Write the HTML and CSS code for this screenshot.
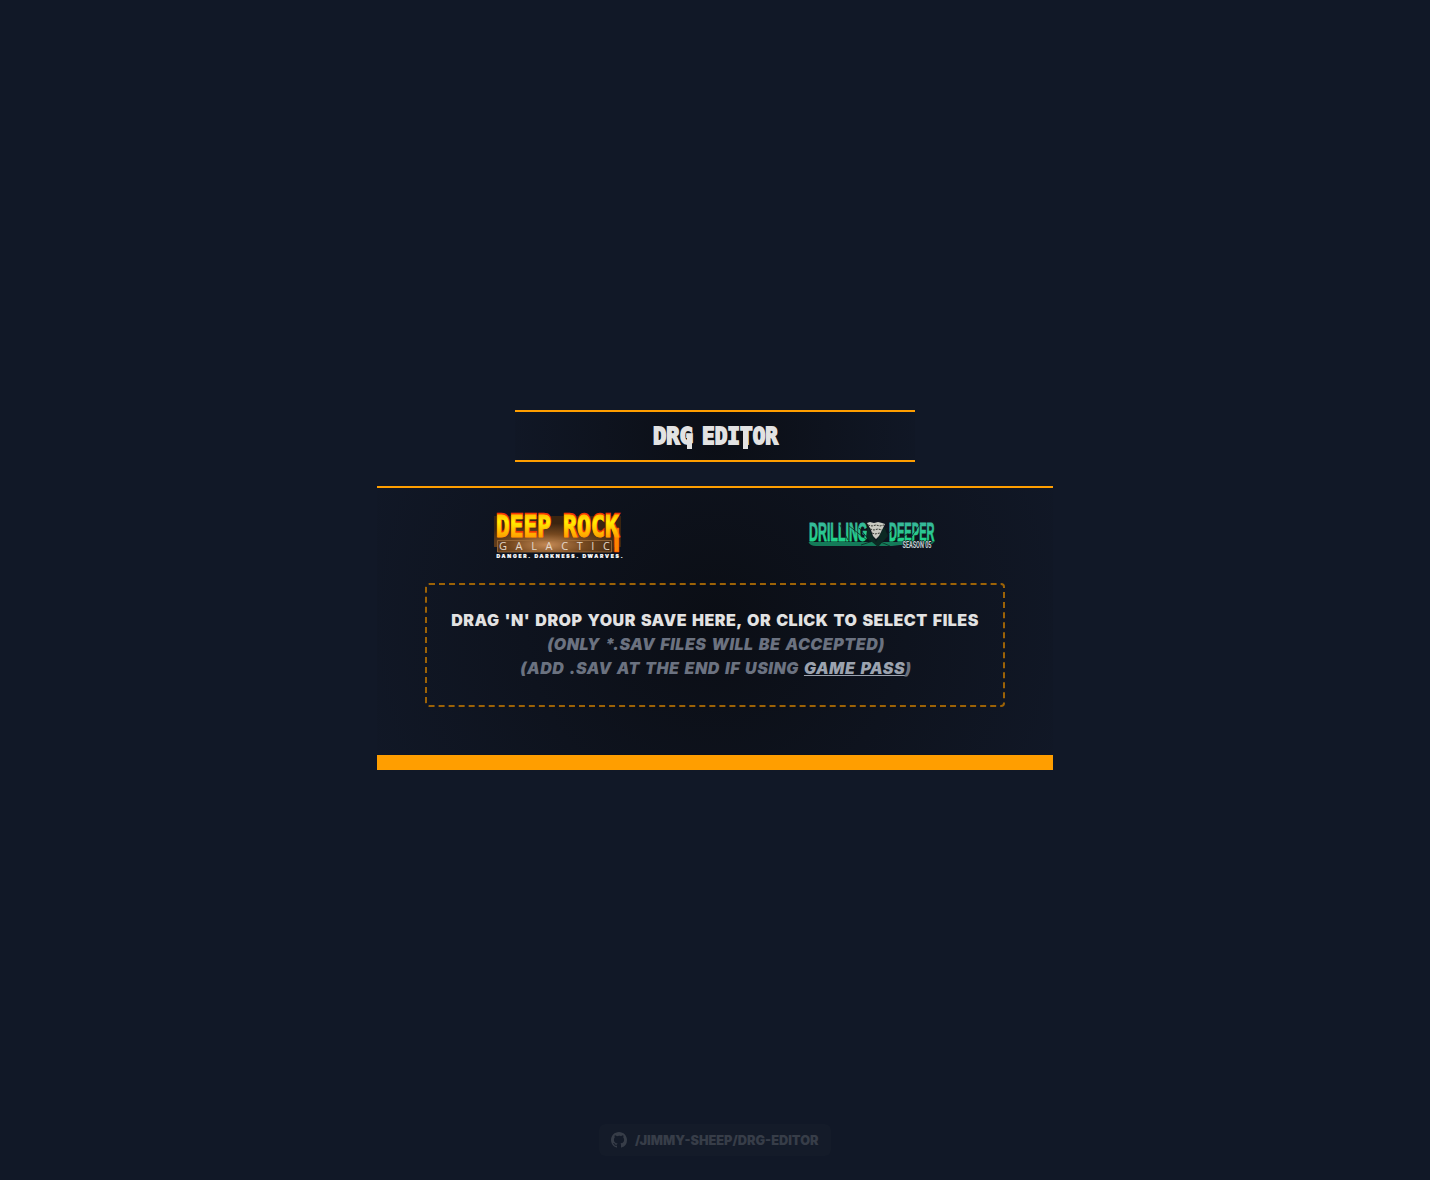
FILE: index.html
```html
<!DOCTYPE html>
<html lang="en">
<head>
<meta charset="utf-8">
<title>DRG Editor</title>
<link rel="stylesheet" href="styles.css">
</head>
<body>
<main class="page">
  <header class="title">
    <svg class="title-art" width="400" height="48" viewBox="0 0 400 48" role="heading" aria-label="DRG Editor">
      <text class="title-text" x="138" y="31.500" textLength="40" lengthAdjust="spacingAndGlyphs">DRG</text>
      <text class="title-text" x="187" y="31.500" textLength="76" lengthAdjust="spacingAndGlyphs">EDITOR</text>
      <path class="title-tail" d="M172 23h5v14h-5zM228 16h5v21h-5z"/>
    </svg>
  </header>
  <section class="panel">
    <div class="logos">
      <svg class="logo" width="130" height="52" viewBox="0 0 130 52">
        <defs>
          <linearGradient id="gold" x1="0" y1="3" x2="0" y2="28" gradientUnits="userSpaceOnUse">
            <stop offset="0" stop-color="#ffb400"/><stop offset=".35" stop-color="#fff000"/><stop offset="1" stop-color="#ff9b00"/>
          </linearGradient>
          <radialGradient id="glow" cx=".42" cy=".8" r=".6">
            <stop offset="0" stop-color="#c58a55"/><stop offset=".5" stop-color="#75481f"/><stop offset="1" stop-color="#3a2410"/>
          </radialGradient>
        </defs>
        <path d="M1 6h127v31h-7v5H4v-5H1z" fill="url(#glow)"/>
        <path d="M4.500 30.500h114v11.500H4.500z" fill="none" stroke="#a06d3b" stroke-width=".8"/>
        <g class="gold-shadow">
          <text x="3" y="26" textLength="55" lengthAdjust="spacingAndGlyphs">DEEP</text>
          <text x="70" y="26" textLength="56" lengthAdjust="spacingAndGlyphs">ROCK</text>
        </g>
        <path d="M121 18h5v24h-4.500z" fill="#ff8500" stroke="#f33b00" stroke-width=".6"/>
        <g class="gold">
          <text x="3" y="26.700" textLength="55" lengthAdjust="spacingAndGlyphs">DEEP</text>
          <text x="70" y="26.700" textLength="56" lengthAdjust="spacingAndGlyphs">ROCK</text>
        </g>
        <text class="galactic" x="6" y="40" textLength="111">GALACTIC</text>
        <text class="motto" x="3.500" y="47.800" textLength="126">DANGER. DARKNESS. DWARVES.</text>
      </svg>
      <svg class="logo" width="130" height="52" viewBox="0 0 130 52">
        <defs>
          <linearGradient id="green" x1="0" y1="12" x2="0" y2="31" gradientUnits="userSpaceOnUse">
            <stop offset="0" stop-color="#38b69b"/><stop offset="1" stop-color="#20d58a"/>
          </linearGradient>
        </defs>
        <path d="M1.500 32h125.500l-2 2-32 1-8 1H9q-6 0-7.500-4z" fill="#147a59"/>
        <g class="drill">
          <text x="2" y="30.500" textLength="58.500" lengthAdjust="spacingAndGlyphs">DRILLING</text>
          <text x="82" y="30.500" textLength="45.500" lengthAdjust="spacingAndGlyphs">DEEPER</text>
        </g>
        <path d="M33 15l8 15M42 16l18 14M52 18l11 13M60 20l9 14 11-16M72 32l14-13M88 29l13-5M54 35l15-5 14 6M113 14l-8 12" fill="none" stroke="#0b2722" stroke-width=".8"/>
        <path d="M61 17l8 15 8-15 4 9-10 11-12-10z" fill="#0b2923"/>
        <path d="M60 13l3-1 4 1 4-1 4 1 3 1-3 6-3 6-3 3-3-3-2-6z" fill="#c9cac2"/>
        <path d="M61 15l4 1 4-1 4 1 4-1M63 19l4 1 4-1 4 1M65 23l3 1 5-1" fill="none" stroke="#343832" stroke-width="1" stroke-dasharray="2 1"/>
        <text class="season" x="95.500" y="37.500" textLength="29" lengthAdjust="spacingAndGlyphs">SEASON 05</text>
      </svg>
    </div>
    <div class="dropzone">
      <p class="lead">Drag 'n' drop your save here, or click to select files</p>
      <p class="hint">(Only *.sav files will be accepted)</p>
      <p class="hint">(Add .sav at the end if using <a class="pass">Game Pass</a>)</p>
    </div>
  </section>
</main>
<footer class="footer">
  <a class="repo">
    <svg class="github" viewBox="0 0 16 16" width="16" height="16"><path fill="currentColor" d="M8 0C3.580 0 0 3.580 0 8c0 3.540 2.290 6.530 5.470 7.590.4.070.55-.17.55-.38 0-.19-.01-.82-.01-1.490-2.010.37-2.530-.49-2.690-.94-.09-.23-.48-.94-.82-1.130-.28-.15-.68-.52-.01-.53.63-.01 1.080.58 1.230.82.72 1.210 1.870.87 2.330.66.07-.52.28-.87.51-1.070-1.780-.2-3.640-.89-3.640-3.950 0-.87.31-1.590.82-2.150-.08-.2-.36-1.020.08-2.120 0 0 .67-.21 2.200.82A7.600 7.600 0 0 1 8 3.860c.68 0 1.360.09 2 .27 1.530-1.040 2.200-.82 2.200-.82.44 1.100.16 1.920.08 2.120.51.56.82 1.270.82 2.150 0 3.070-1.870 3.750-3.650 3.950.29.25.54.73.54 1.480 0 1.070-.01 1.930-.01 2.200 0 .21.15.46.55.38A8.010 8.010 0 0 0 16 8c0-4.420-3.580-8-8-8z"/></svg>
    <span>/Jimmy-Sheep/drg-editor</span>
  </a>
</footer>
</body>
</html>
```
FILE: styles.css
```css
* { box-sizing: border-box; }
body {
  margin: 0;
  height: 1180px;
  display: grid;
  grid-template-rows: 1124px 32px;
  background: #111827;
  color: #e2e2e2;
  font-family: Inter, sans-serif;
  font-weight: 900;
  text-transform: uppercase;
  overflow: hidden;
}
.page {
  display: flex;
  flex-direction: column;
  align-items: center;
  padding-top: 410px;
  gap: 24px;
}
.title {
  width: 400px;
  height: 52px;
  border-block: 2px solid #ff9e00;
  background: radial-gradient(circle, #0b0e15, #111827 110%);
}
.title-art { display: block; }
.title-text { font: 700 23.500px "DejaVu Sans Mono", monospace; fill: #e2e2e2; stroke: #e2e2e2; stroke-width: 1.800px; }
.title-tail { fill: #e2e2e2; }
.panel {
  width: 676px;
  height: 284px;
  padding: 22px 48px 48px;
  border-top: 2px solid #ff9e00;
  border-bottom: 15px solid #ff9e00;
  background: radial-gradient(circle, #0b0e15, #111827 105%);
}
.logos { display: flex; justify-content: space-between; padding: 0 68px; height: 73px; }
.logo { display: block; overflow: visible; }
.gold, .gold-shadow { font: 700 30.500px "DejaVu Sans Mono", monospace; }
.gold { fill: url(#gold); stroke: url(#gold); stroke-width: .9px; }
.gold-shadow { fill: #ff4a00; stroke: #f33800; stroke-width: 2.400px; }
.galactic { font: 400 11px "Open Sans", sans-serif; fill: #e4d8cb; }
.motto { font: 900 5px Inter, sans-serif; fill: #fff; stroke: #fff; stroke-width: .2px; }
.drill { font: 700 25px "Liberation Sans", sans-serif; fill: url(#green); stroke: url(#green); stroke-width: .8px; }
.season { font: 700 9px Roboto, sans-serif; fill: #c5ced4; stroke: #101a20; stroke-width: 1.500px; paint-order: stroke; }
.dropzone {
  height: 124px;
  padding-top: 23px;
  border: 2px dashed #9c6206;
  border-radius: 4px;
  text-align: center;
  font-size: 16px;
  line-height: 24px;
  letter-spacing: .5px;
  word-spacing: 1.400px;
  white-space: nowrap;
}
.dropzone p { margin: 0; }
.hint { color: #6b7280; font-style: italic; padding-left: 2px; }
.pass { color: #9ca3af; text-decoration: underline; text-decoration-thickness: 1px; }
.footer { display: flex; justify-content: center; }
.repo {
  width: 232px;
  height: 32px;
  padding-left: 12px;
  display: flex;
  align-items: center;
  gap: 8px;
  border-radius: 6px;
  background: #141b29;
  color: #373d48;
  font-size: 12.750px;
  white-space: nowrap;
}
```
